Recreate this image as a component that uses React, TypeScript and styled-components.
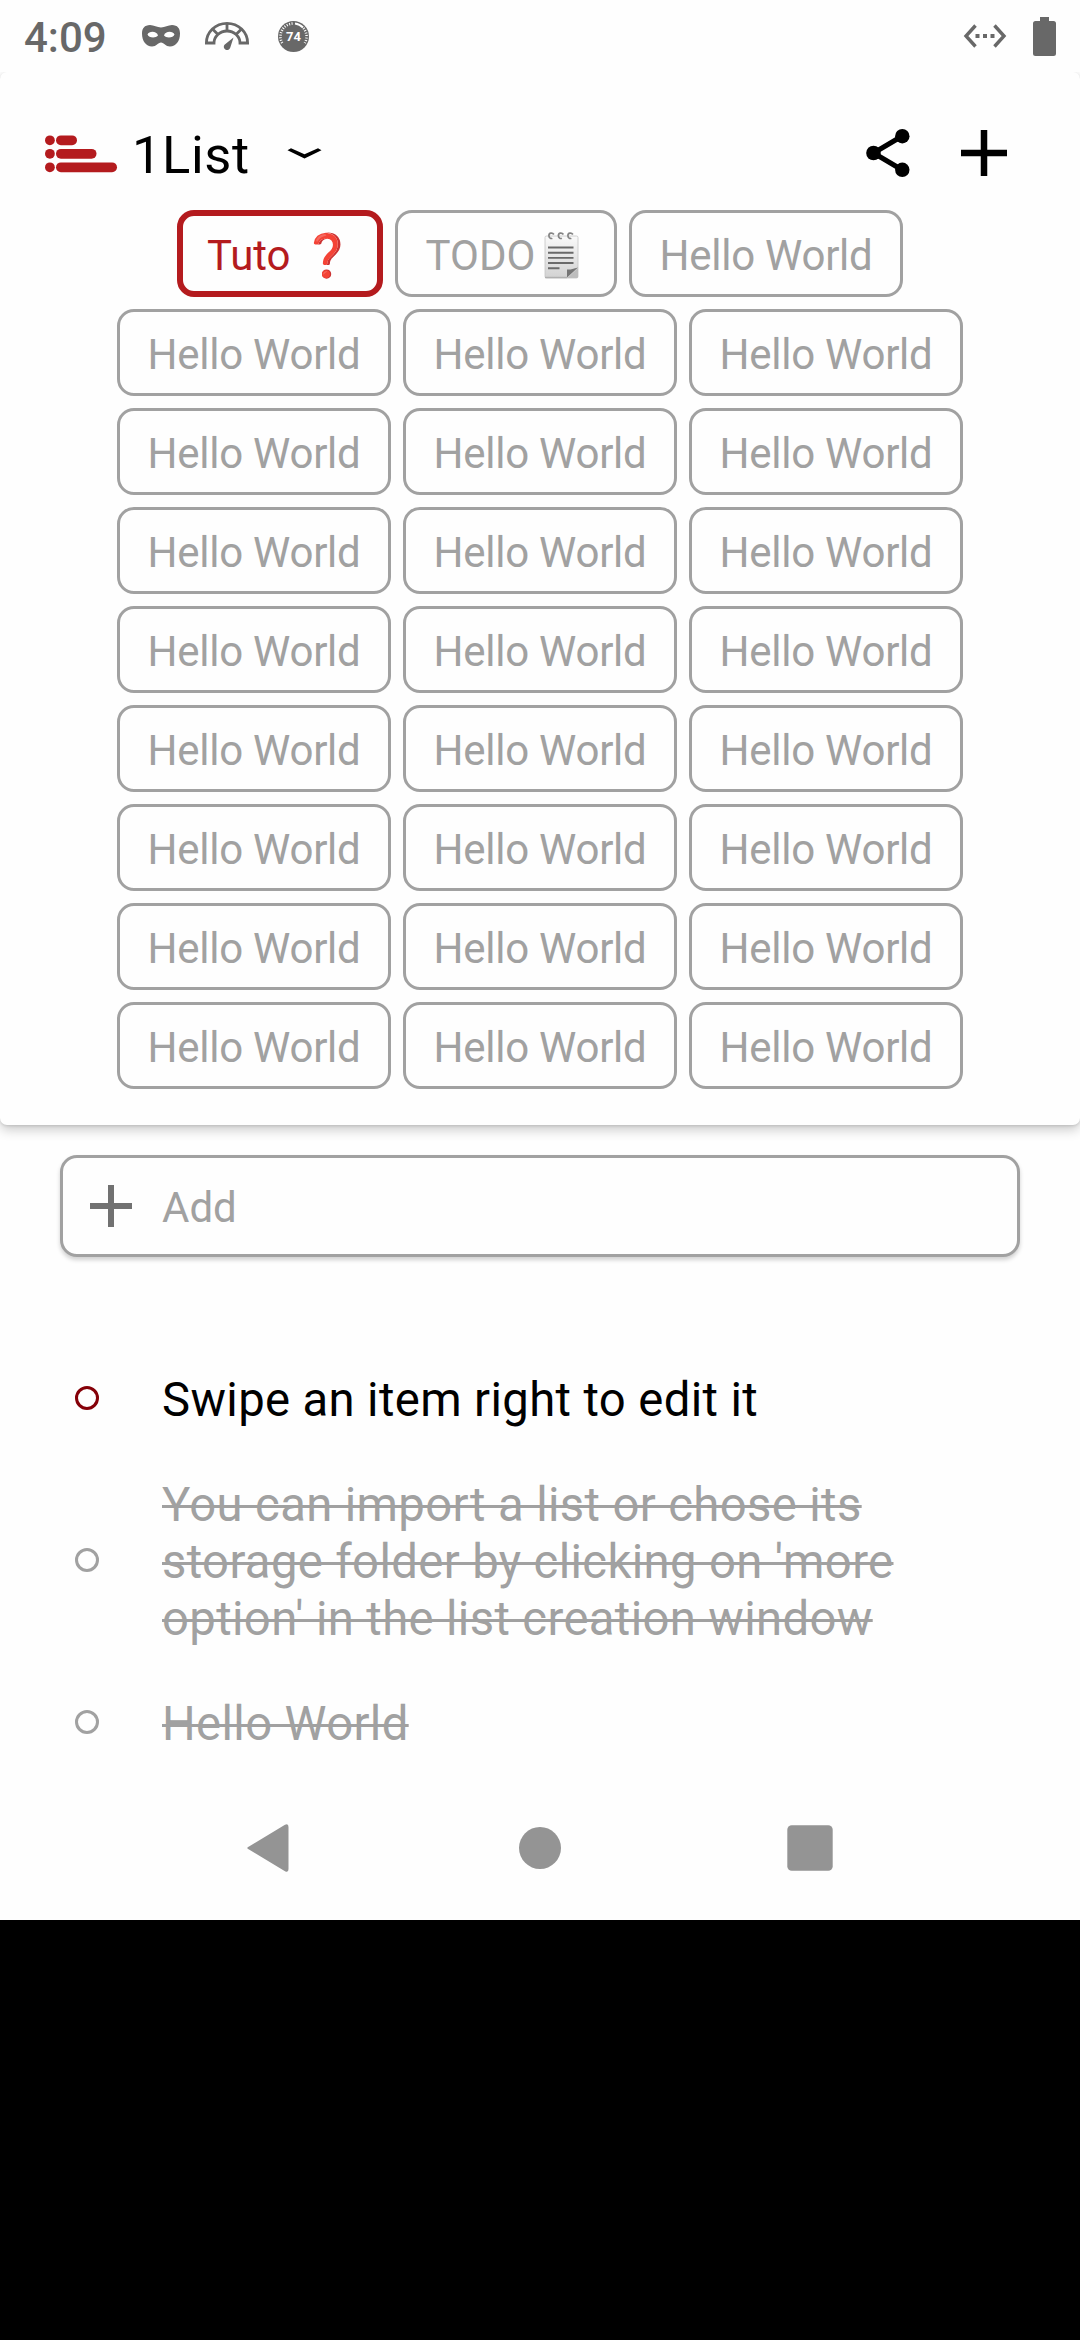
import React from 'react';
import styled, { createGlobalStyle } from 'styled-components';

const RED = '#b41b1e';
const GREY = '#a1a1a1';
const STATUS = '#686868';
const SURFACE = '#fefefe';

const GlobalStyle = createGlobalStyle`
  * { box-sizing: border-box; }
  html, body { margin: 0; padding: 0; background: #000; }
  body { font-family: Roboto, "Noto Sans", sans-serif; }
  svg { display: block; flex: none; overflow: visible; }
`;

const Screen = styled.main`
  width: 1080px;
  height: 2340px;
  background: #000;
  overflow: hidden;
`;

const Phone = styled.div`
  width: 1080px;
  height: 1920px;
  background: ${SURFACE};
  display: flex;
  flex-direction: column;
`;

const StatusBar = styled.header`
  height: 72px;
  flex: none;
  display: flex;
  align-items: center;
  justify-content: space-between;
  padding: 0 24px;
`;

const StatusGroup = styled.div<{ $gap: number }>`
  display: flex;
  align-items: center;
  gap: ${(p) => p.$gap}px;
`;

const Clock = styled.span`
  width: 94px;
  padding-top: 4px;
  font-size: 42px;
  font-weight: 500;
  line-height: 50px;
  color: ${STATUS};
  white-space: nowrap;
`;

const Panel = styled.section`
  height: 1053px;
  flex: none;
  border-radius: 7px;
  background: ${SURFACE};
  box-shadow: 0 5px 12px rgba(0, 0, 0, 0.2), 0 1px 3px rgba(0, 0, 0, 0.12);
  clip-path: inset(0 0 -40px 0);
`;

const TitleBar = styled.div`
  height: 138px;
  display: flex;
  align-items: center;
  padding: 24px 73px 0 45px;
`;

const Title = styled.h1`
  margin: 0 36px 0 15px;
  padding-top: 4px;
  width: 119px;
  font-size: 52.5px;
  font-weight: 400;
  letter-spacing: 0.6px;
  line-height: 62px;
  color: #000;
  white-space: nowrap;
`;

const Actions = styled.div`
  margin-left: auto;
  display: flex;
  align-items: center;
  gap: 51px;
`;

const Tabs = styled.nav`
  display: flex;
  flex-direction: column;
  gap: 12px;
`;

const TabRow = styled.div`
  display: flex;
  justify-content: center;
  gap: 12px;
`;

const Tab = styled.button<{ $width: number; $active?: boolean; $tight?: boolean }>`
  width: ${(p) => p.$width}px;
  height: 87px;
  padding: 4px 0 0;
  display: flex;
  align-items: center;
  justify-content: center;
  border: ${(p) => (p.$active ? 6 : 3)}px solid ${(p) => (p.$active ? RED : GREY)};
  border-radius: 17px;
  background: ${SURFACE};
  color: ${(p) => (p.$active ? RED : GREY)};
  font-family: inherit;
  font-size: 42px;
  letter-spacing: ${(p) => (p.$tight ? '-0.24px' : 'normal')};
  line-height: 50px;
  white-space: pre;
`;

const AddField = styled.div`
  height: 102px;
  flex: none;
  margin: 30px 60px 0;
  padding-left: 27px;
  display: flex;
  align-items: center;
  gap: 30px;
  border: 3px solid ${GREY};
  border-radius: 17px;
  background: ${SURFACE};
  box-shadow: 0 3px 4px rgba(0, 0, 0, 0.18);
  position: relative;
`;

const Placeholder = styled.span`
  padding-top: 4px;
  font-size: 42px;
  line-height: 50px;
  color: ${GREY};
`;

const List = styled.ul`
  list-style: none;
  margin: 88px 0 0;
  padding: 0;
`;

const Item = styled.li<{ $done?: boolean }>`
  display: flex;
  align-items: center;
  padding: 27px 0 21px 75px;
  font-size: 47.25px;
  letter-spacing: 0.36px;
  line-height: 57px;
  color: ${(p) => (p.$done ? GREY : '#000')};
  text-decoration: ${(p) => (p.$done ? 'line-through 3px' : 'none')};
`;

const Bullet = styled.span<{ $done?: boolean }>`
  width: 24px;
  height: 24px;
  flex: none;
  margin: 0 63px 6px 0;
  border: 3px solid ${(p) => (p.$done ? GREY : '#850008')};
  border-radius: 50%;
`;

const ItemText = styled.span`
  width: 800px;
`;

const NavBar = styled.footer`
  height: 144px;
  margin-top: auto;
  flex: none;
  display: grid;
  grid-template-columns: repeat(3, 270px);
  justify-content: center;
  align-items: center;
  justify-items: center;
`;

function MaskIcon() {
  return (
    <svg width="38" height="22" viewBox="0 0 38 22">
      <path
        fillRule="evenodd"
        fill={STATUS}
        d="M8 0C12 0 15 2.5 19 2.5S26 0 30 0C35.5 0 38 3.5 38 8.5C38 16 34 21.5 28 21.5C23.500 21.500 22 17.500 19 17.500S14.500 21.500 10 21.500C4 21.500 0 16 0 8.500C0 3.500 2.500 0 8 0ZM5.500 9.500C6.500 13 14 13.300 16 10.500C15 5.800 7 5.500 5.500 9.500ZM32.500 9.500C31 5.500 23 5.800 22 10.500C24 13.300 31.500 13 32.500 9.500Z"
      />
    </svg>
  );
}

function GaugeIcon() {
  return (
    <svg width="48" height="28" viewBox="0 0 48 28" fill="none" stroke={STATUS}>
      <path
        strokeWidth="2.800"
        d="M1.400 21C1.400 10 10.500 1.400 22 1.400S42.600 10 42.600 21H35C35 14.500 29 9 22 9S9 14.500 9 21Z"
      />
      <path strokeWidth="2.800" d="M22 1V9M7.500 7L13 12.500M36.500 7L31 12.500" />
      <path fill={STATUS} stroke="none" d="M28.500 15.500L25.300 25.500A3.300 3.300 0 1 1 19.500 22.700Z" />
    </svg>
  );
}

function LevelIcon() {
  return (
    <svg width="31" height="31" viewBox="0 0 31 31">
      <circle cx="15.500" cy="15.500" r="15.500" fill={STATUS} />
      <path d="M4.200 22A13 13 0 0 1 15.500 2.500" fill="none" stroke="#fff" strokeWidth="2.600" strokeDasharray="1 1.500" />
      <path d="M17 2.400A13 13 0 0 1 25 6.500" fill="none" stroke="#fff" strokeWidth="2" />
      <path d="M25.500 7.200A13 13 0 0 1 26.800 22" fill="none" stroke="#fff" strokeWidth="2.600" strokeDasharray="1 1.500" />
      <text x="15.500" y="20" textAnchor="middle" fill="#fff" fontFamily="Roboto, sans-serif" fontWeight="700" fontSize="13">
        74
      </text>
    </svg>
  );
}

function EthernetIcon() {
  return (
    <svg width="42" height="24" viewBox="0 0 42 24">
      <path d="M11.500 1.500L2 12L11.500 22.500M30.500 1.500L40 12L30.500 22.500" fill="none" stroke={STATUS} strokeWidth="3.400" />
      <path d="M11.500 10h4v4h-4zM19 10h4v4h-4zM26.500 10h4v4h-4z" fill={STATUS} />
    </svg>
  );
}

function BatteryIcon() {
  return (
    <svg width="23" height="39" viewBox="0 0 23 39">
      <path d="M7 0H16V4H20.500Q23 4 23 6.500V36.500Q23 39 20.500 39H2.500Q0 39 0 36.500V6.500Q0 4 2.500 4H7Z" fill={STATUS} />
    </svg>
  );
}

function Logo() {
  return (
    <svg width="72" height="37" viewBox="0 0 72 37" fill={RED}>
      {[21, 40.5, 61].map((w, i) => (
        <React.Fragment key={w}>
          <circle cx="4.900" cy={5.3 + i * 13.5} r="4.900" />
          <rect x="11" y={0.4 + i * 13.5} width={w} height="9.800" rx="4.900" />
        </React.Fragment>
      ))}
    </svg>
  );
}

function ChevronIcon() {
  return (
    <svg width="35" height="11" viewBox="0 0 35 11">
      <path d="M.5 2.200L4 .3L17.500 6.200L31 .3L34.500 2.200L17.500 10.600Z" fill="#000" />
    </svg>
  );
}

function ShareIcon() {
  return (
    <svg width="44" height="48" viewBox="0 0 44 48">
      <path d="M36.300 7L7.500 24L36.300 41" fill="none" stroke="#000" strokeWidth="5" />
      <circle cx="7.500" cy="24" r="7.300" />
      <circle cx="36.300" cy="7.200" r="7.200" />
      <circle cx="36.300" cy="40.800" r="7.200" />
    </svg>
  );
}

function PlusIcon({ size, color, weight }: { size: number; color: string; weight: number }) {
  const mid = size / 2;
  return (
    <svg width={size} height={size} viewBox={`0 0 ${size} ${size}`}>
      <path d={`M${mid} 0V${size}M0 ${mid}H${size}`} stroke={color} strokeWidth={weight} />
    </svg>
  );
}

function NotepadIcon() {
  return (
    <svg width="51" height="47" viewBox="-1 0 51 47">
      <defs>
        <linearGradient id="paper" x1="0" y1="0" x2="0" y2="1">
          <stop offset="0" stopColor="#fafafa" />
          <stop offset="1" stopColor="#d2d2d2" />
        </linearGradient>
      </defs>
      <rect x="9" y="4" width="33" height="42" rx="1.500" fill="url(#paper)" stroke="#c4c4c4" strokeWidth="0.800" />
      <path d="M9 45.500H31" stroke="#b0b0b0" strokeWidth="1.400" />
      <path d="M12 15.500H37.500M12 20.700H37.500M12 25.900H37.500M12 31H37.500M12 36.300H23.500" stroke="#6a6a6a" strokeWidth="1.900" />
      <path d="M31 45.500V37.500H34.500L42 35.500Z" fill="#757575" />
      <path d="M42 36L31.500 46H40.500Q42 46 42 44.500Z" fill="#bdbdbd" />
      {[15.5, 25, 34.5].map((x) => (
        <path
          key={x}
          d={`M${x + 2.4} 2.500C${x + 1} .3 ${x - 2.6} .6 ${x - 2.6} 3.600C${x - 2.6} 6 ${x - 0.5} 7 ${x + 0.8} 6.200`}
          fill="none"
          stroke="#858585"
          strokeWidth="1.700"
        />
      ))}
    </svg>
  );
}

const HELLO = 'Hello World';
const helloRows = Array.from({ length: 8 }, () => [HELLO, HELLO, HELLO]);

export default function App() {
  return (
    <Screen>
      <GlobalStyle />
      <Phone>
        <StatusBar>
          <StatusGroup $gap={24}>
            <Clock>4:09</Clock>
            <StatusGroup $gap={25}>
              <MaskIcon />
              <GaugeIcon />
              <LevelIcon />
            </StatusGroup>
          </StatusGroup>
          <StatusGroup $gap={27}>
            <EthernetIcon />
            <BatteryIcon />
          </StatusGroup>
        </StatusBar>

        <Panel>
          <TitleBar>
            <Logo />
            <Title>1List</Title>
            <ChevronIcon />
            <Actions>
              <ShareIcon />
              <PlusIcon size={46} color="#000" weight={6.5} />
            </Actions>
          </TitleBar>
          <Tabs>
            <TabRow>
              <Tab $width={206} $active>Tuto ❓</Tab>
              <Tab $width={222}>
                TODO
                <NotepadIcon />
              </Tab>
              <Tab $width={274} $tight>{HELLO}</Tab>
            </TabRow>
            {helloRows.map((row, r) => (
              <TabRow key={r}>
                {row.map((label, c) => (
                  <Tab key={c} $width={274} $tight>{label}</Tab>
                ))}
              </TabRow>
            ))}
          </Tabs>
        </Panel>

        <AddField>
          <PlusIcon size={42} color="#717171" weight={6} />
          <Placeholder>Add</Placeholder>
        </AddField>

        <List>
          <Item>
            <Bullet />
            <ItemText>Swipe an item right to edit it</ItemText>
          </Item>
          <Item $done>
            <Bullet $done />
            <ItemText>
              You can import a list or chose its storage folder by clicking on 'more option' in the list creation window
            </ItemText>
          </Item>
          <Item $done>
            <Bullet $done />
            <ItemText>{HELLO}</ItemText>
          </Item>
        </List>

        <NavBar>
          <svg width="48" height="48" viewBox="0 0 48 48">
            <path d="M3 22.500L39 .8Q42.500 -1 42.500 3V45Q42.500 49 39 47.200L3 25.500Q-.5 24 3 22.500Z" fill="#949494" />
          </svg>
          <svg width="42" height="42" viewBox="0 0 42 42">
            <circle cx="21" cy="21" r="21" fill="#949494" />
          </svg>
          <svg width="46" height="46" viewBox="0 0 46 46">
            <rect x=".3" y=".3" width="45.400" height="45.400" rx="4.500" fill="#949494" />
          </svg>
        </NavBar>
      </Phone>
    </Screen>
  );
}
